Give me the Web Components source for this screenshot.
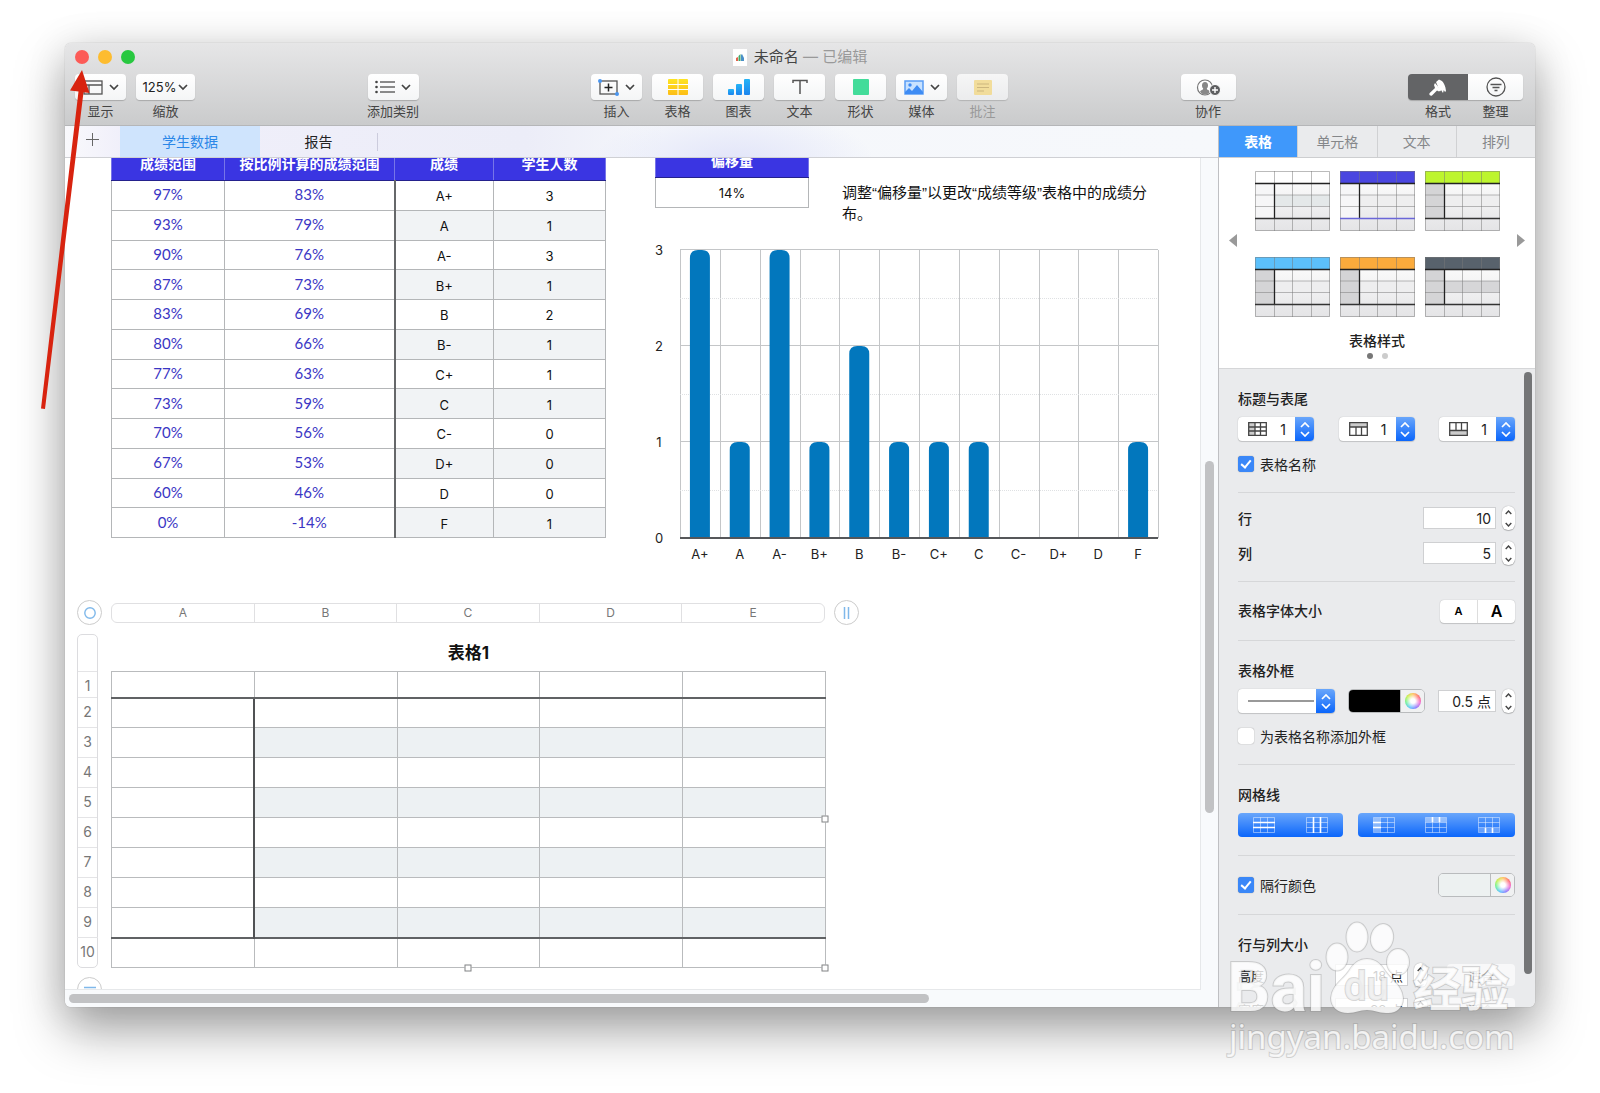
<!DOCTYPE html>
<html lang="zh-CN">
<head>
<meta charset="utf-8">
<title>未命名</title>
<style>
body{
    margin: 0;
    position: relative;
    height: 100vh;
    overflow: hidden;
    background: #fff;
    font-family: Inter, "Noto Sans CJK SC", sans-serif;
    font-size: 14px;
    color: #222;
}
</style>
</head>
<body>
<app-window>
    <app-toolbar slot="toolbar"></app-toolbar>
    <sheet-tabs slot="tabs"></sheet-tabs>
    <sheet-canvas slot="canvas">
        <grade-table slot="grades"></grade-table>
        <offset-table slot="offset"></offset-table>
        <grade-chart slot="chart"></grade-chart>
        <grid-editor slot="editor" data-rows="10" data-cols="5"></grid-editor>
    </sheet-canvas>
    <format-inspector slot="inspector"></format-inspector>
</app-window>
<site-mark></site-mark>
<pointer-arrow></pointer-arrow>

<script>
// makes an element class from a chunk of markup
const element = (html) => {
    const template = document.createElement("template");
    template.innerHTML = html;
    return class extends HTMLElement {
        constructor() {
            super();
            this.attachShadow({ mode: "open" });
            this.shadowRoot.appendChild(template.content.cloneNode(true));
        }
    };
};

const chevron = `<svg width="10" height="7" viewBox="0 0 10 7" fill="none" stroke="#444" stroke-width="1.700"><path d="M1 1l4 4 4-4"/></svg>`;

/* ---------- window frame ---------- */
customElements.define("app-window", element(`
<style>
:host{
    display: flex;
    flex-direction: column;
    box-sizing: border-box;
    height: calc(100vh - 129px);
    margin: 43px 65px 86px;
    border-radius: 6px;
    overflow: hidden;
    background: #fff;
    box-shadow: 0 0 1px rgba(0,0,0,.4), 0 24px 50px rgba(0,0,0,.34), 0 4px 40px rgba(0,0,0,.12);
}
.body{
    display: flex;
    flex: 1;
    min-height: 0;
}
.main{
    display: flex;
    flex-direction: column;
    flex: 1;
    min-width: 0;
}
</style>
<slot name="toolbar"></slot>
<div class="body">
    <div class="main">
        <slot name="tabs"></slot>
        <slot name="canvas"></slot>
    </div>
    <slot name="inspector"></slot>
</div>`));

/* ---------- toolbar ---------- */
class ToolButton extends element(`
<style>
:host{
    display: flex;
    flex-direction: column;
    align-items: center;
    width: var(--w, 51px);
}
button{
    display: flex;
    align-items: center;
    justify-content: center;
    gap: 6px;
    width: 100%;
    height: 26px;
    padding: 0;
    border: 0;
    border-radius: 4px;
    background: linear-gradient(#fff, #f4f5f6);
    box-shadow: 0 1px 1px rgba(0,0,0,.2);
    font: inherit;
    font-size: 13px;
    color: #222;
}
label{
    font-size: 13px;
    line-height: 22px;
    white-space: nowrap;
    color: #444;
}
:host([data-dim]) label{ color: #999; }
:host([data-dim]) button{ opacity: .75; }
:host([data-side="left"]) button{
    border-radius: 4px 0 0 4px;
    background: #636466;
}
:host([data-side="right"]) button{ border-radius: 0 4px 4px 0; }
.zoom{ gap: 2px; }
</style>
<button id="b"><slot></slot></button>
<label for="b"></label>`) {
    connectedCallback() {
        this.shadowRoot.querySelector("label").textContent = this.dataset.label;
        if (this.hasAttribute("data-menu")) {
            this.shadowRoot.querySelector("button").insertAdjacentHTML("beforeend", chevron);
        }
        if (this.dataset.menu === "tight") this.shadowRoot.querySelector("button").className = "zoom";
    }
}
customElements.define("tool-button", ToolButton);

customElements.define("app-toolbar", element(`
<style>
:host{
    display: block;
    flex: none;
    height: 82px;
    border-bottom: 1px solid #b5b6b8;
    background: linear-gradient(#e6e6e7, #cacbcc);
}
.title{
    display: grid;
    grid-template-columns: 1fr auto 1fr;
    align-items: center;
    height: 28px;
    margin-bottom: 3px;
    padding: 0 10px;
    box-sizing: border-box;
}
.lights{ display: flex; gap: 9px; }
.lights button{
    width: 14px;
    height: 14px;
    padding: 0;
    border: 0;
    border-radius: 50%;
}
.name{
    display: flex;
    align-items: center;
    gap: 7px;
    font-size: 15px;
    line-height: 26px;
    color: #444;
}
.name i{ font-style: normal; color: #999; }
.tools{
    display: flex;
    justify-content: space-between;
    padding: 0 12px 0 10px;
}
.group{ display: flex; gap: 10px; }
.group.joined{ gap: 0; }
</style>
<div class="title">
    <div class="lights">
        <button style="background:#fc5b57" aria-label="close"></button>
        <button style="background:#fdbc2f" aria-label="minimize"></button>
        <button style="background:#28c840" aria-label="zoom"></button>
    </div>
    <div class="name">
        <svg width="14" height="17" viewBox="0 0 14 17"><rect width="14" height="17" fill="#fff"/><path d="M3 12V9l2-1v4z" fill="#e2604a"/><path d="M5.500 12V7l2-2v7z" fill="#45a96a"/><path d="M8 12V6l1-1 2 4v3z" fill="#4a90c8"/></svg>
        <span>未命名 <i>— 已编辑</i></span>
    </div>
</div>
<div class="tools">
    <div class="group">
        <tool-button data-label="显示" data-menu>
            <svg width="20" height="15" viewBox="0 0 20 15" fill="none" stroke="#555" stroke-width="1.300"><rect x="1" y="1" width="18" height="13"/><path d="M1 5h18M6 5v9"/></svg>
        </tool-button>
        <tool-button data-label="缩放" data-menu="tight" style="--w:59px">125%</tool-button>
    </div>
    <tool-button data-label="添加类别" data-menu>
        <svg width="20" height="14" viewBox="0 0 20 14" stroke="#666" stroke-width="1.300"><path d="M5 2h15M5 7h15M5 12h15"/><g fill="#444" stroke="none"><circle cx="1.500" cy="2" r="1.300"/><circle cx="1.500" cy="7" r="1.300"/><circle cx="1.500" cy="12" r="1.300"/></g></svg>
    </tool-button>
    <div class="group">
        <tool-button data-label="插入" data-menu>
            <svg width="21" height="17" viewBox="0 0 21 17" fill="none"><rect x="2" y="2" width="17" height="13" stroke="#555" stroke-width="1.300"/><path d="M6.500 8.500h8M10.500 4.500v8" stroke="#222" stroke-width="1.500"/><circle cx="2" cy="2" r="2" fill="#4a96f0"/><circle cx="19" cy="15" r="2" fill="#4a96f0"/></svg>
        </tool-button>
        <tool-button data-label="表格">
            <svg width="20" height="16" viewBox="0 0 20 16"><defs><linearGradient id="y" x2="0" y2="1"><stop stop-color="#fde423"/><stop offset="1" stop-color="#fdbd16"/></linearGradient></defs><rect width="20" height="16" rx="1" fill="url(#y)"/><path d="M10 0v16M0 5.500h20M0 10.500h20" stroke="#fff" stroke-width="1"/></svg>
        </tool-button>
        <tool-button data-label="图表">
            <svg width="22" height="16" viewBox="0 0 22 16"><defs><linearGradient id="b" x2="0" y2="1"><stop stop-color="#25b4f6"/><stop offset="1" stop-color="#1c84ee"/></linearGradient></defs><g fill="url(#b)"><rect y="10" width="6" height="6" rx="1"/><rect x="8" y="5" width="6" height="11" rx="1"/><rect x="16" width="6" height="16" rx="1"/></g></svg>
        </tool-button>
        <tool-button data-label="文本">
            <svg width="16" height="16" viewBox="0 0 16 16" fill="none" stroke="#555" stroke-width="1.500"><path d="M1 4V1.500h14V4M8 1.500V15"/></svg>
        </tool-button>
        <tool-button data-label="形状">
            <svg width="16" height="16" viewBox="0 0 16 16"><rect width="16" height="16" rx="1" fill="#43dc9a"/></svg>
        </tool-button>
        <tool-button data-label="媒体" data-menu>
            <svg width="20" height="15" viewBox="0 0 20 15"><rect x="1" y="1" width="18" height="13" fill="#c8e2ff" stroke="#5a9df5" stroke-width="1.500"/><path d="M1 12l4-4 3 3 5-6 6 7v2H1z" fill="#3e8cf4"/><circle cx="6" cy="5" r="1.700" fill="#3e8cf4"/></svg>
        </tool-button>
        <tool-button data-label="批注" data-dim>
            <svg width="18" height="15" viewBox="0 0 18 15"><rect width="18" height="15" rx="1" fill="#fbdf87"/><path d="M3 4h12M3 7.500h12M3 11h7" stroke="#c9ab60"/></svg>
        </tool-button>
    </div>
    <tool-button data-label="协作" style="--w:55px">
        <svg width="25" height="17" viewBox="0 0 25 17"><circle cx="9" cy="8.500" r="7.500" fill="#fff" stroke="#777" stroke-width="1.200"/><path d="M9 3c2 0 3 1.500 3 3.500 0 1.500-.7 2.500-1.200 3 0 1.500 2.200 1.500 3.200 3C12.500 15 10.500 15.500 9 15.500S5.500 15 4 12.500c1-1.500 3.200-1.500 3.200-3-.5-.5-1.200-1.500-1.200-3C6 4.500 7 3 9 3z" fill="#888"/><circle cx="19" cy="11" r="5.500" fill="#5d5e60" stroke="#fff"/><path d="M16 11h6M19 8v6" stroke="#fff" stroke-width="1.400"/></svg>
    </tool-button>
    <div class="group joined">
        <tool-button data-label="格式" data-side="left" style="--w:60px">
            <svg width="18" height="17" viewBox="0 0 18 17" fill="#fff"><path d="M7 3l3-2.500L13 2c2 2 3.500 5 4 10l-1 1-1.200-2-.8 3-2-3-1 1.500z"/><path d="M6 4l6 7-2 1.500-2-1-5 5c-1.500 1-3.500-1-2.300-2.500L6 9 5 6z"/></svg>
        </tool-button>
        <tool-button data-label="整理" data-side="right" style="--w:55px">
            <svg width="20" height="20" viewBox="0 0 20 20" fill="none" stroke="#555" stroke-width="1.300"><circle cx="10" cy="10" r="9"/><path d="M4.500 7.500h11M6.500 10.500h7M8.500 13.500h3"/></svg>
        </tool-button>
    </div>
</div>`));

customElements.define("sheet-tabs", element(`
<style>
:host{
    display: flex;
    align-items: center;
    flex: none;
    height: 31px;
    border-bottom: 1px solid #cfd0d4;
    background:
        radial-gradient(ellipse 140px 50px at 58% 110%, #e2e5f9, transparent),
        linear-gradient(90deg, #f9f9fc, #f0effa 5%, #ecedf8 40%, #f5f7fb 52%, #f6f8fb);
}
button{
    height: 31px;
    padding: 0 0 2px;
    border: 0;
    background: none;
    font: inherit;
    color: #222;
}
.add{ width: 55px; }
.on{
    width: 140px;
    background: #cfe4fd;
    color: #2b87e8;
}
.off{ width: 117px; }
hr{
    width: 1px;
    height: 18px;
    margin: 0;
    border: 0;
    background: #ccd;
}
</style>
<button class="add" aria-label="add sheet"><svg width="13" height="13" viewBox="0 0 13 13" stroke="#666"><path d="M0 6.500h13M6.500 0v13"/></svg></button>
<button class="on">学生数据</button>
<button class="off">报告</button>
<hr>`));

/* ---------- canvas ---------- */
customElements.define("sheet-canvas", element(`
<style>
:host{
    display: grid;
    grid-template: minmax(0, 1fr) 17px / minmax(0, 1fr) 17px;
    flex: 1;
    min-height: 0;
    background: #f8fafc;
}
.sheet{
    overflow: hidden;
    border-right: 1px solid #e6e8ea;
    border-bottom: 1px solid #e6e8ea;
    background: #fff;
}
/* scrolled so that both header rows are partly hidden */
.inner{
    display: flex;
    flex-direction: column;
    gap: 38px;
    margin-top: -12px;
    padding-left: 12px;
}
.top{
    display: flex;
    align-items: flex-start;
    gap: 49px;
    padding-left: 34px;
}
.top > slot:first-child::slotted(*){ margin-top: 3px; }
.right{
    display: flex;
    flex-direction: column;
    gap: 32px;
}
.note{
    display: flex;
    gap: 33px;
}
p{
    width: 308px;
    margin: 36px 0 -36px;
    font-family: "Liberation Sans", "Noto Sans CJK SC", sans-serif;
    font-size: 15px;
    line-height: 21px;
    color: #111;
}
.v{
    display: flex;
    flex-direction: column;
    align-items: center;
}
.h{
    display: flex;
    align-items: center;
    grid-column: span 2;
}
.thumb{
    border-radius: 5px;
    background: #c1c2c4;
}
</style>
<div class="sheet"><div class="inner">
    <div class="top">
        <slot name="grades"></slot>
        <div class="right">
            <div class="note">
                <slot name="offset"></slot>
                <p>调整“偏移量”以更改“成绩等级”表格中的成绩分布。</p>
            </div>
            <slot name="chart"></slot>
        </div>
    </div>
    <slot name="editor"></slot>
</div></div>
<div class="v"><span style="flex:303"></span><span class="thumb" style="flex:352;width:9px"></span><span style="flex:177"></span></div>
<div class="h"><span style="flex:4"></span><span class="thumb" style="flex:860;height:9px"></span><span style="flex:289"></span></div>`));

const grades = [
    ["97%", "83%", "A+", 3], ["93%", "79%", "A", 1], ["90%", "76%", "A-", 3],
    ["87%", "73%", "B+", 1], ["83%", "69%", "B", 2], ["80%", "66%", "B-", 1],
    ["77%", "63%", "C+", 1], ["73%", "59%", "C", 1], ["70%", "56%", "C-", 0],
    ["67%", "53%", "D+", 0], ["60%", "46%", "D", 0], ["0%", "-14%", "F", 1]
];

const tableStyle = `
:host{ display: block; }
table{
    border-collapse: collapse;
    table-layout: fixed;
    font-size: 13px;
    text-align: center;
    color: #111;
}
th, td{
    padding: 0;
    border: 1px solid #b4b6b8;
    line-height: 20px;
}
th{
    height: 28px;
    padding-bottom: 2px;
    border-color: #3a35e2 #7775e8 #24218c;
    background: #3a35e2;
    color: #fff;
    font-size: 14px;
    font-weight: 700;
}`;

customElements.define("grade-table", class extends element(`
<style>${tableStyle}
table{ width: 495px; height: 389px; }
td:nth-child(-n+2){
    padding-bottom: 2px;
    font-family: Lato, sans-serif;
    font-size: 15px;
    color: #3b36c4;
}
td:nth-child(n+3){ padding-top: 2px; }
td:nth-child(3){ border-left: 2px solid #66686a; }
tr:nth-child(even) td:nth-child(n+3){ background: #f1f3f5; }
</style>
<table>
    <colgroup><col style="width:113px"><col style="width:170px"><col style="width:99px"><col></colgroup>
    <thead><tr><th>成绩范围</th><th>按比例计算的成绩范围</th><th>成绩</th><th>学生人数</th></tr></thead>
    <tbody></tbody>
</table>`) {
    connectedCallback() {
        this.shadowRoot.querySelector("tbody").innerHTML =
            grades.map(row => `<tr>${row.map(v => `<td>${v}</td>`).join("")}</tr>`).join("");
    }
});

customElements.define("offset-table", element(`
<style>${tableStyle}
table{ width: 154px; }
td{ height: 29px; }
</style>
<table>
    <thead><tr><th>偏移量</th></tr></thead>
    <tbody><tr><td>14%</td></tr></tbody>
</table>`));

customElements.define("grade-chart", class extends HTMLElement {
    constructor() {
        super();
        this.attachShadow({ mode: "open" });
    }

    connectedCallback() {
        const left = 25, top = 10, width = 478, height = 288;
        const step = width / grades.length;
        let out = "";
        for (let i = 0; i <= grades.length; i++) {
            const x = Math.round(left + i * step) + .5;
            out += `<path d="M${x} ${top}v${height}" stroke="#c4c6c8"/>`;
        }
        for (let i = 0; i <= 3; i++) {
            const y = top + height - i * 96;
            if (i) {
                out += `<path d="M${left} ${y - .5}h${width}" stroke="#c4c6c8"/>`;
                out += `<path d="M${left} ${y + 48.5}h${width}" stroke="#dfe1e3" stroke-dasharray="1 1"/>`;
            }
            out += `<text x="4" y="${y + 5}" text-anchor="middle">${i}</text>`;
        }
        grades.forEach((row, i) => {
            const x = left + (i + .5) * step;
            const h = row[3] * 96;
            if (h) {
                out += `<path d="M${x - 10} ${top + height}v${-h + 8}q0-8 8-8h4q8 0 8 8v${h - 8}z" fill="#0277bd"/>`;
            }
            out += `<text x="${x}" y="${top + height + 21}" text-anchor="middle">${row[2]}</text>`;
        });
        out += `<path d="M${left} ${top + height}h${width}" stroke="#55575a" stroke-width="2"/>`;
        this.shadowRoot.innerHTML = `
<style>
:host{ display: block; }
svg{ display: block; overflow: visible; }
text{ font-size: 13px; fill: #222; }
</style>
<svg width="505" height="322" viewBox="0 0 505 322">${out}</svg>`;
    }
});

customElements.define("grid-editor", class extends element(`
<style>
:host{
    display: grid;
    grid-template-columns: 25px 714px 25px;
    gap: 9px;
    color: #777;
}
.knob{
    display: grid;
    place-items: center;
    box-sizing: border-box;
    width: 25px;
    height: 25px;
    padding: 0;
    border: 1px solid #ccc;
    border-radius: 50%;
    background: #fff;
}
.cols{
    display: flex;
    align-self: center;
    height: 18px;
    border: 1px solid #e0e0e2;
    border-radius: 6px;
    font-size: 12px;
    line-height: 18px;
    text-align: center;
}
.cols span{ flex: 1; }
.cols span + span{ border-left: 1px solid #e0e0e2; }
.rows{
    box-sizing: border-box;
    width: 21px;
    border: 1px solid #dcdcdf;
    border-radius: 5px;
    text-align: center;
}
.rows span{
    display: block;
    box-sizing: border-box;
    height: 30px;
    line-height: 28px;
    border-top: 1px solid #e4e4e6;
}
.rows span:first-child{ height: 36px; border: 0; }
.rows span:nth-child(2){ height: 26px; }
.rows span:last-child{ margin: 0 -1px; }
.grid{ position: relative; }
table{
    width: 715px;
    border-collapse: collapse;
    table-layout: fixed;
}
caption{
    padding-top: 2px;
    font-size: 17px;
    font-weight: 700;
    line-height: 35px;
    color: #111;
}
td{
    box-sizing: border-box;
    height: 30px;
    padding: 0;
    border: 1px solid #b9bbbd;
}
tr:first-child td{ height: 26px; border-bottom: 2px solid #606264; }
tr:last-child td{ border-top: 2px solid #606264; }
tr:not(:first-child):not(:last-child) td:first-child{ border-right: 2px solid #505254; }
tr:nth-child(odd):not(:first-child) td + td{ background: #edf1f3; }
/* selection handles sit over the table's edges */
.grip{
    position: absolute;
    width: 5px;
    height: 5px;
    border: 1px solid #808284;
    background: #fff;
    transform: translate(-50%, -50%);
}
</style>
<button class="knob" aria-label="select table"><svg width="12" height="12" viewBox="0 0 12 12"><circle cx="6" cy="6" r="5.200" fill="none" stroke="#7fb8ea" stroke-width="1.400"/></svg></button>
<div class="cols"></div>
<button class="knob" aria-label="columns"><svg width="7" height="12" viewBox="0 0 7 12" stroke="#7fb8ea" stroke-width="1.500"><path d="M1.500 0v12M5.500 0v12"/></svg></button>
<div class="rows"></div>
<div class="grid">
    <table><caption>表格1</caption><tbody></tbody></table>
    <i class="grip" style="left:50%;top:100%"></i>
    <i class="grip" style="left:100%;top:calc(50% + 18px)"></i>
    <i class="grip" style="left:100%;top:100%"></i>
</div>
<span></span>
<button class="knob" aria-label="rows"><svg width="12" height="7" viewBox="0 0 12 7" stroke="#7fb8ea" stroke-width="1.500"><path d="M0 1.500h12M0 5.500h12"/></svg></button>`) {
    connectedCallback() {
        const rows = +this.dataset.rows, cols = +this.dataset.cols;
        const find = (s) => this.shadowRoot.querySelector(s);
        for (let c = 0; c < cols; c++) {
            find(".cols").innerHTML += `<span>${String.fromCharCode(65 + c)}</span>`;
        }
        find(".rows").innerHTML = "<span></span>";
        for (let r = 1; r <= rows; r++) {
            find(".rows").innerHTML += `<span>${r}</span>`;
        }
        find("tbody").innerHTML = `<tr>${"<td></td>".repeat(cols)}</tr>`.repeat(rows);
    }
});

/* ---------- inspector ---------- */
customElements.define("style-thumb", class extends HTMLElement {
    constructor() {
        super();
        this.attachShadow({ mode: "open" });
    }

    connectedCallback() {
        const head = this.dataset.head || "#fff";
        const side = this.dataset.side || "#f6f6f7";
        const band = this.dataset.band || "#eeeeef";
        const foot = this.dataset.foot || "#333";
        this.shadowRoot.innerHTML = `
<style>
:host{ display: block; }
button{ display: block; padding: 0; border: 0; background: none; }
svg{ display: block; }
</style>
<button aria-label="style"><svg width="75" height="60" viewBox="0 0 75 60">
<defs><linearGradient id="g" x2="0" y2="1"><stop stop-color="#fff"/><stop offset="1" stop-color="#e4e4e6"/></linearGradient></defs>
<rect width="75" height="60" fill="url(#g)"/>
<rect y="12" width="19" height="35" fill="${side}"/>
<rect x="19" y="24" width="56" height="11" fill="${band}"/>
<rect width="75" height="12" fill="${head}"/>
<path d="M.5 .5h74v59H.5zM19.500 0v60M37.500 0v60M56.500 0v60M0 24h75M0 35.500h75" fill="none" stroke="#777" stroke-opacity=".5"/>
<path d="M0 12.500h75M19.500 12v35" stroke="#222" stroke-width="1.300"/>
<path d="M0 47.500h75" stroke="${foot}" stroke-width="1.300"/>
</svg></button>`;
    }
});

customElements.define("pop-select", class extends element(`
<style>
:host{
    display: flex;
    align-items: center;
    box-sizing: border-box;
    height: 24px;
    width: var(--w, 76px);
    border-radius: 4px;
    overflow: hidden;
    background: #fff;
    box-shadow: 0 0 1px rgba(0,0,0,.3), 0 1px 1px rgba(0,0,0,.15);
}
.icon{ display: flex; padding-left: 10px; }
select{
    flex: 1;
    min-width: 0;
    height: 24px;
    padding: 0 9px;
    border: 0;
    background: none;
    appearance: none;
    font: inherit;
    color: #222;
    text-align: right;
}
.cap{
    display: grid;
    place-items: center;
    width: 19px;
    height: 24px;
    background: linear-gradient(#69a6fb, #0b66fb);
}
</style>
<span class="icon"><slot></slot></span>
<select aria-label="count"><option></option></select>
<span class="cap"><svg width="10" height="15" viewBox="0 0 10 15" fill="none" stroke="#fff" stroke-width="1.700"><path d="M1 5l4-4 4 4M1 10l4 4 4-4"/></svg></span>`) {
    connectedCallback() {
        this.shadowRoot.querySelector("option").textContent = this.dataset.value || "";
        // without a value the icon takes the whole field
        if (!this.dataset.value) this.shadowRoot.querySelector("select").style.padding = 0;
    }
});

customElements.define("value-stepper", element(`
<style>
:host{
    display: flex;
    flex-direction: column;
    width: 13px;
    height: 24px;
    border-radius: 6px;
    background: #fff;
    box-shadow: 0 0 1px rgba(0,0,0,.4), 0 1px 1px rgba(0,0,0,.2);
}
button{
    display: grid;
    place-items: center;
    flex: 1;
    padding: 0;
    border: 0;
    background: none;
}
svg{ fill: none; stroke: #444; stroke-width: 1.400; }
</style>
<button aria-label="up"><svg width="7" height="5" viewBox="0 0 7 5"><path d="M.7 4l2.800-3 2.800 3"/></svg></button>
<button aria-label="down"><svg width="7" height="5" viewBox="0 0 7 5"><path d="M.7 1l2.800 3 2.800-3"/></svg></button>`));

customElements.define("step-field", class extends element(`
<style>
:host{
    display: flex;
    align-items: center;
    gap: 6px;
    height: 24px;
}
label{
    flex: 1;
    font-weight: 500;
}
label:empty{ display: none; }
input{
    box-sizing: border-box;
    width: var(--w, 73px);
    height: 22px;
    padding: 0 4px;
    border: 1px solid #cfd0d2;
    background: #fff;
    font: inherit;
    color: #222;
    text-align: right;
}
</style>
<label for="f"></label><input id="f"><value-stepper></value-stepper>`) {
    connectedCallback() {
        const input = this.shadowRoot.querySelector("input");
        input.value = this.dataset.value;
        this.shadowRoot.querySelector("label").textContent = this.dataset.label || "";
        if (!this.dataset.label) input.setAttribute("aria-label", "value");
    }
});

customElements.define("check-line", class extends element(`
<style>
:host{
    display: flex;
    align-items: center;
    gap: 6px;
    height: 20px;
}
input{
    display: grid;
    place-items: center;
    appearance: none;
    box-sizing: border-box;
    width: 16px;
    height: 16px;
    margin: 0;
    border-radius: 3px;
    background: #fff;
    box-shadow: 0 0 1px rgba(0,0,0,.5);
}
input:checked{ background: #3a87f8; }
input:checked::before{
    content: "";
    width: 4px;
    height: 8px;
    margin-bottom: 2px;
    border: solid #fff;
    border-width: 0 2px 2px 0;
    transform: rotate(40deg);
}
</style>
<input type="checkbox" id="c"><label for="c"><slot></slot></label>`) {
    connectedCallback() {
        this.shadowRoot.querySelector("input").checked = this.hasAttribute("data-on");
    }
});

customElements.define("color-well", element(`
<style>
:host{
    display: flex;
    box-sizing: border-box;
    width: 77px;
    height: 24px;
    border: 1px solid #b9bbbd;
    border-radius: 5px;
    overflow: hidden;
}
.swatch, .wheel{ padding: 0; border: 0; }
.swatch{ flex: 1; background: var(--fill, #000); }
.wheel{
    display: grid;
    place-items: center;
    width: 24px;
    border-left: 1px solid #b9bbbd;
    background: #f0f1f2;
}
.wheel::before{
    content: "";
    width: 16px;
    height: 16px;
    border-radius: 50%;
    background: radial-gradient(#fff 20%, transparent 75%), conic-gradient(#fb4, #f55, #e5c, #76f, #4bf, #5e8, #be3, #fb4);
}
</style>
<button class="swatch" aria-label="fill"></button>
<button class="wheel" aria-label="colors"></button>`));

// small outline of a grid with some lines or cells picked out
const gridIcon = (extra) => `<svg width="22" height="16" viewBox="0 0 22 16" fill="none" stroke="#fff"><path d="M.5 .5h21v15H.5zM.5 5.500h21M.5 10.500h21M7.500 .5v15M14.500 .5v15" stroke-opacity=".45"/>${extra}</svg>`;
const headIcon = (path, fill) => `<svg width="19" height="14" viewBox="0 0 19 14" fill="none" stroke="#444" stroke-width="1.300">${fill}<path d="M.7 .7h17.600v12.600H.7z${path}"/></svg>`;

customElements.define("format-inspector", element(`
<style>
:host{
    display: flex;
    flex-direction: column;
    flex: none;
    box-sizing: border-box;
    width: 317px;
    border-left: 1px solid #bfc0c3;
    background: #eaebed;
}
button{ padding: 0; border: 0; background: none; font: inherit; }
nav{
    display: flex;
    flex: none;
    height: 31px;
    border-bottom: 1px solid #cdced0;
}
nav button{
    flex: 1;
    padding-bottom: 2px;
    color: #85878a;
}
nav button + button{ border-left: 1px solid #d0d1d3; }
nav .on{
    background: #3f98fb;
    color: #fff;
    font-weight: 700;
}
.styles{
    display: flex;
    align-items: center;
    justify-content: space-between;
    flex: none;
    box-sizing: border-box;
    height: 211px;
    padding: 2px 10px 0;
    border-bottom: 1px solid #d5d6d8;
    background: #fff;
}
.styles > button{ margin-bottom: 46px; }
.choice{
    display: flex;
    flex-direction: column;
    align-items: center;
}
.thumbs{
    display: grid;
    grid-template-columns: repeat(3, 75px);
    gap: 26px 10px;
    padding: 1px 0 13px;
}
.choice b{ line-height: 22px; font-weight: 500; }
.dots{ display: flex; gap: 9px; padding-top: 1px; }
.dots i{ width: 6px; height: 6px; border-radius: 3px; background: #ccc; }
.dots i:first-child{ background: #777; }
.pane{
    display: flex;
    flex: 1;
    min-height: 0;
    overflow: hidden;
}
.form{
    flex: 1;
    min-width: 0;
    padding: 0 9px 0 19px;
}
.bar{
    display: flex;
    flex-direction: column;
    width: 8px;
    padding: 3px 3px 0 0;
}
.bar i{ flex: 602; border-radius: 4px; background: #747577; }
.bar::after{ content: ""; flex: 33; }
section{
    display: flex;
    flex-direction: column;
    gap: 13px;
    padding: 20px 0 18px;
    border-bottom: 1px solid #d6d7d9;
}
section.slim{ gap: 11px; padding: 13px 0 16px; }
section.line{ padding: 17px 0; }
section.size{ gap: 10px; border: 0; }
h3{
    margin: 0 0 -5px;
    font-size: 14px;
    font-weight: 500;
    line-height: 20px;
}
.size h3{ margin-bottom: -2px; }
.row{
    display: flex;
    align-items: center;
    justify-content: space-between;
    height: 24px;
}
.row h3{ margin: 0; }
.fonts{
    display: flex;
    width: 75px;
    height: 23px;
    border-radius: 4px;
    background: #fff;
    box-shadow: 0 0 1px rgba(0,0,0,.3), 0 1px 1px rgba(0,0,0,.15);
    font-weight: 600;
}
.fonts button{ flex: 1; font-size: 11px; }
.fonts button + button{ border-left: 1px solid #ddd; font-size: 16px; }
.lines{
    display: flex;
    height: 24px;
    border-radius: 4px;
    background: linear-gradient(#69a6fb, #0b66fb);
}
.lines button{ display: grid; place-items: center; flex: 1; }
.dim{
    display: grid;
    grid-template-columns: 1fr auto 68px;
    align-items: center;
    gap: 20px;
    height: 24px;
    font-size: 13px;
}
.dim button{ height: 22px; border-radius: 4px; background: #f8f8f9; color: #aaa; }
</style>
<nav>
    <button class="on">表格</button><button>单元格</button><button>文本</button><button>排列</button>
</nav>
<div class="styles">
    <button aria-label="previous"><svg width="8" height="13" viewBox="0 0 8 13"><path d="M8 0v13L0 6.500z" fill="#999"/></svg></button>
    <div class="choice">
        <div class="thumbs">
            <style-thumb data-band="#e4e8e9"></style-thumb>
            <style-thumb data-head="#4a46e0" data-foot="#6a66d8"></style-thumb>
            <style-thumb data-head="#bdf52e" data-side="#d4d4d6"></style-thumb>
            <style-thumb data-head="#5cc0fb" data-side="#d4d4d6"></style-thumb>
            <style-thumb data-head="#fbab3c" data-side="#d4d4d6"></style-thumb>
            <style-thumb data-head="#58626c" data-side="#d4d4d6" data-band="#d6d6d8"></style-thumb>
        </div>
        <b>表格样式</b>
        <div class="dots"><i></i><i></i></div>
    </div>
    <button aria-label="next"><svg width="8" height="13" viewBox="0 0 8 13"><path d="M0 0v13l8-6.500z" fill="#999"/></svg></button>
</div>
<div class="pane">
    <div class="form">
        <section>
            <h3>标题与表尾</h3>
            <div class="row">
                <pop-select data-value="1">${headIcon("M1 5h17M1 9h17M7 1v12M12.500 1v12", `<path d="M1 1h6v12H1z" fill="#ccc" stroke="none"/>`)}</pop-select>
                <pop-select data-value="1">${headIcon("M1 5h17M7 5v8M12.500 5v8", `<path d="M1 1h17v4H1z" fill="#ccc" stroke="none"/>`)}</pop-select>
                <pop-select data-value="1">${headIcon("M1 8.500h17M7 1v7.500M12.500 1v7.500", `<path d="M1 9h17v4H1z" fill="#ccc" stroke="none"/>`)}</pop-select>
            </div>
            <check-line data-on>表格名称</check-line>
        </section>
        <section class="slim">
            <step-field data-label="行" data-value="10"></step-field>
            <step-field data-label="列" data-value="5"></step-field>
        </section>
        <section class="line">
            <div class="row"><h3>表格字体大小</h3><div class="fonts"><button>A</button><button>A</button></div></div>
        </section>
        <section>
            <h3>表格外框</h3>
            <div class="row">
                <pop-select style="--w:97px"><svg width="66" height="2" viewBox="0 0 66 2"><path d="M0 1h66" stroke="#777" stroke-width="1.500"/></svg></pop-select>
                <color-well></color-well>
                <step-field data-value="0.5 点" style="--w:58px"></step-field>
            </div>
            <check-line>为表格名称添加外框</check-line>
        </section>
        <section>
            <h3>网格线</h3>
            <div class="row">
                <div class="lines" style="width:105px">
                    <button aria-label="rows">${gridIcon(`<path d="M0 5.500h22M0 10.500h22" stroke-width="1.600"/>`)}</button>
                    <button aria-label="columns">${gridIcon(`<path d="M7.500 0v16M14.500 0v16" stroke-width="1.600"/>`)}</button>
                </div>
                <div class="lines" style="width:157px">
                    <button aria-label="header columns">${gridIcon(`<path d="M1 1h6v14H1z" fill="#fff" fill-opacity=".4" stroke="none"/><path d="M0 5.500h8M0 10.500h8" stroke-width="1.600"/>`)}</button>
                    <button aria-label="header rows">${gridIcon(`<path d="M1 1h20v4H1z" fill="#fff" fill-opacity=".4" stroke="none"/><path d="M7.500 0v5M14.500 0v5" stroke-width="1.600"/>`)}</button>
                    <button aria-label="footer rows">${gridIcon(`<path d="M1 11h20v4H1z" fill="#fff" fill-opacity=".3" stroke="none"/><path d="M7.500 11v5M14.500 11v5" stroke-width="1.600"/>`)}</button>
                </div>
            </div>
        </section>
        <section class="line">
            <div class="row"><check-line data-on>隔行颜色</check-line><color-well style="--fill:#edf1f1"></color-well></div>
        </section>
        <section class="size">
            <h3>行与列大小</h3>
            <div class="dim"><span>高度</span><step-field data-value="18 点" style="--w:73px"></step-field><button>适合</button></div>
            <div class="dim"><span>宽度</span><step-field data-value="98 点" style="--w:73px"></step-field><button>适合</button></div>
        </section>
    </div>
    <div class="bar"><i></i></div>
</div>`));

/* ---------- things laid over the window ---------- */
customElements.define("site-mark", element(`
<style>
:host{
    display: block;
    position: absolute;
    right: 84px;
    bottom: 30px;
    pointer-events: none;
}
svg{
    display: block;
    overflow: visible;
    fill: rgba(255,255,255,.8);
    stroke: rgba(140,140,140,.35);
    stroke-width: 2;
    paint-order: stroke;
}
.big{ font: 700 68px Roboto, sans-serif; }
.cjk{ font: 700 48px "Noto Sans CJK SC", sans-serif; }
.du{ font: 500 40px Roboto, sans-serif; fill: rgba(240,240,240,.9); }
.url{ font: 33px "Noto Sans", sans-serif; }
</style>
<svg width="290" height="145" viewBox="0 0 290 145">
    <text class="big" x="1" y="93">Bai</text>
    <ellipse cx="111" cy="39" rx="10.500" ry="13.500"/>
    <ellipse cx="131" cy="19" rx="10.500" ry="14.500"/>
    <ellipse cx="156" cy="20" rx="11" ry="14" transform="rotate(12 156 20)"/>
    <ellipse cx="172" cy="44" rx="11" ry="13"/>
    <path d="M141 41c9 0 14 5 18 12 6 9 17 14 18 27 0 10-7 16-17 15-8 0-11-3-19-3s-11 3-19 3c-10 0-17-6-17-15 1-13 12-18 18-27 4-7 9-12 18-12z"/>
    <text class="du" x="118" y="82">du</text>
    <text class="cjk" x="187" y="88">经验</text>
    <text class="url" x="3" y="131">jingyan.baidu.com</text>
</svg>`));

customElements.define("pointer-arrow", element(`
<style>
:host{
    display: block;
    position: absolute;
    left: 38px;
    top: 68px;
    pointer-events: none;
}
svg{ display: block; }
</style>
<svg width="56" height="344" viewBox="0 0 56 344"><path d="M44 2l7.500 23-6-.8L7 341l-4-.5L40.500 23.500 32 22.500z" fill="#d8230f"/></svg>`));
</script>
</body>
</html>
